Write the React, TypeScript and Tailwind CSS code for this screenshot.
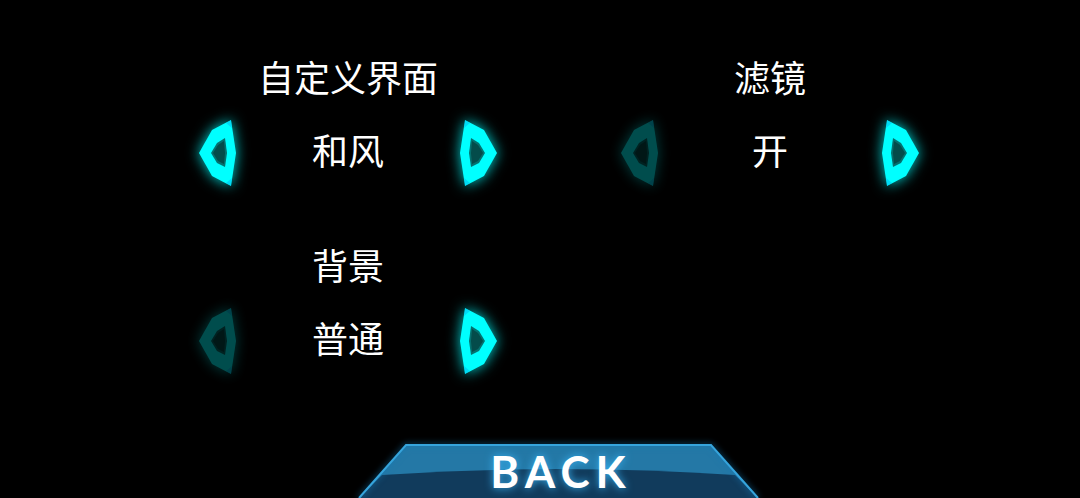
import { useState } from "react";

type Setting = {
    id: string;
    label: string;
    options: string[];
    initial: number;
};

const settings: Setting[] = [
    { id: "skin", label: "自定义界面", options: ["默认", "和风", "简约"], initial: 1 },
    { id: "filter", label: "滤镜", options: ["开", "关"], initial: 0 },
    { id: "background", label: "背景", options: ["普通", "动态"], initial: 0 },
];

function ArrowButton({ flip, label, disabled, onClick }: {
    flip?: boolean;
    label: string;
    disabled: boolean;
    onClick: () => void;
}) {
    return (
        <button
            type="button"
            aria-label={label}
            disabled={disabled}
            onClick={onClick}
            className={`cursor-pointer disabled:cursor-default disabled:opacity-30 ${flip ? "-scale-x-100" : ""}`}
        >
            <svg
                viewBox="0 0 38 66"
                className="block h-[66px] w-[38px] overflow-visible drop-shadow-[0_0_7px_#00d8d8]"
            >
                <path d="M0 33 13 10 32 0 37 33 32 66 13 56Z" fill="#00ffff" />
                <path d="M12 33 18 23 26 18 28 33 26 47 18 43Z" fill="#04706f" />
                <path d="M14 33 19 25 25 21 26 33 25 44 19 41Z" fill="#044c4b" />
                <path d="M27 3 32 0 33 8ZM27 63 32 66 33 58Z" fill="#0098e8" opacity="0.35" />
            </svg>
        </button>
    );
}

function SettingPicker({ setting }: { setting: Setting }) {
    const [index, setIndex] = useState(setting.initial);

    return (
        <section aria-labelledby={setting.id} className="flex flex-col items-center gap-4">
            <h2 id={setting.id} className="pb-2 text-4xl leading-10">{setting.label}</h2>
            <div className="flex w-full max-w-[298px] items-center justify-between">
                <ArrowButton
                    label="上一个"
                    disabled={index === 0}
                    onClick={() => setIndex(index - 1)}
                />
                <span className="pb-2 text-4xl leading-10">{setting.options[index]}</span>
                <ArrowButton
                    flip
                    label="下一个"
                    disabled={index === setting.options.length - 1}
                    onClick={() => setIndex(index + 1)}
                />
            </div>
        </section>
    );
}

export default function App() {
    return (
        <div className="flex min-h-screen flex-col justify-between bg-black pl-[38px] font-['Noto_Sans_CJK_SC',sans-serif] text-white">
            <main className="mx-auto grid w-full max-w-[844px] grid-cols-2 gap-y-[58px] pt-14">
                {settings.map((setting) => (
                    <SettingPicker key={setting.id} setting={setting} />
                ))}
            </main>

            <footer className="flex justify-center">
                <button type="button" className="relative h-[55px] w-[400px] cursor-pointer">
                    <svg
                        viewBox="0 0 400 55"
                        className="absolute inset-0 h-full w-full overflow-visible"
                        aria-hidden="true"
                    >
                        <path d="M0 55 47 2H352L399 55Z" fill="#2478a6" />
                        <path d="M23 32Q200 20 376 32L399 55H0Z" fill="#113b5c" />
                        <path
                            d="M0 55 47 2H352L399 55"
                            fill="none"
                            stroke="#36a4dc"
                            strokeWidth="2"
                            className="drop-shadow-[0_0_3px_#1478b4]"
                        />
                    </svg>
                    <span className="relative block pl-1 font-['Lato',sans-serif] text-[44px] leading-[56px] font-bold tracking-[6px] text-shadow-[0_0_8px_#38b4f4]">
                        BACK
                    </span>
                </button>
            </footer>
        </div>
    );
}
